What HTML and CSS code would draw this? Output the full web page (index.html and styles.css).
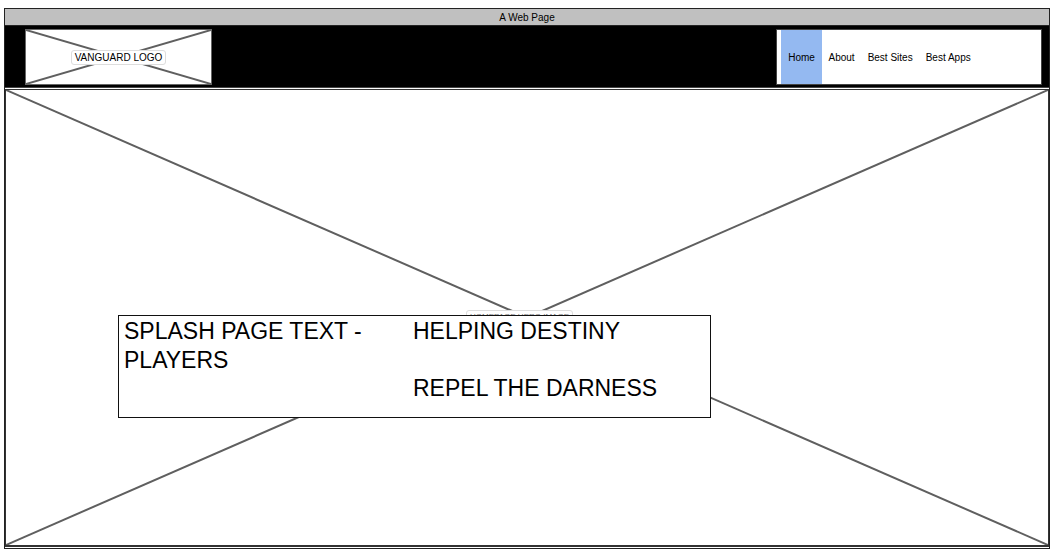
FILE: index.html
```html
<!DOCTYPE html>
<html>
<head>
<meta charset="utf-8">
<link rel="stylesheet" href="styles.css">
</head>
<body>
<div class="window">
  <div class="titlebar">A Web Page</div>
  <div class="header">
    <div class="logo">
      <svg class="xsvg" viewBox="0 0 100 100" preserveAspectRatio="none"><line x1="0" y1="0" x2="100" y2="100" vector-effect="non-scaling-stroke"/><line x1="100" y1="0" x2="0" y2="100" vector-effect="non-scaling-stroke"/></svg>
      <span class="label">VANGUARD LOGO</span>
    </div>
    <nav class="nav">
      <a class="item active">Home</a>
      <a class="item">About</a>
      <a class="item">Best Sites</a>
      <a class="item">Best Apps</a>
    </nav>
  </div>
  <div class="hero">
    <svg class="xsvg" viewBox="0 0 100 100" preserveAspectRatio="none"><line x1="0" y1="0" x2="100" y2="100" vector-effect="non-scaling-stroke"/><line x1="100" y1="0" x2="0" y2="100" vector-effect="non-scaling-stroke"/></svg>
    <span class="label hero-label">HOMEPAGE HERO IMAGE</span>
    <div class="splash">
      <div class="col col1">SPLASH PAGE TEXT - PLAYERS</div>
      <div class="col col2">HELPING DESTINY<br><br>REPEL THE DARNESS</div>
    </div>
  </div>
</div>
</body>
</html>
```
FILE: styles.css
```css
* { box-sizing: border-box; }
body {
  margin: 0;
  background: #fff;
  font-family: "Liberation Sans", Arial, sans-serif;
  color: #000;
}
.window {
  margin: 8px 0 0 4px;
  width: 1046px;
  height: 541px;
  border: 1px solid #222;
  display: flex;
  flex-direction: column;
}
.titlebar {
  height: 17px;
  background: #c0c0c0;
  border-bottom: 1px solid #222;
  font-size: 10px;
  line-height: 18px;
  text-align: center;
}
.header {
  height: 62px;
  background: #000;
  display: flex;
  align-items: stretch;
  padding: 3px 7px 2px 20px;
  border-bottom: 1px solid #444;
}
.logo {
  position: relative;
  width: 187px;
  background: #fff;
  border: 1px solid #666;
  display: flex;
  align-items: center;
  justify-content: center;
}
.xsvg {
  position: absolute;
  inset: 0;
  width: 100%;
  height: 100%;
}
.xsvg line {
  stroke: #5f5f5f;
  stroke-width: 2;
}
.label {
  position: relative;
  background: #fff;
  border: 1px solid #ddd;
  border-radius: 3px;
  font-size: 10px;
  padding: 1px 3px;
}
.nav {
  margin-left: auto;
  width: 266px;
  background: #fff;
  border: 1px solid #444;
  display: flex;
  align-items: stretch;
  padding-left: 4px;
}
.item {
  display: flex;
  align-items: center;
  font-size: 10px;
  padding: 0 6.5px;
}
.item.active {
  background: #94b9f1;
  width: 41px;
  justify-content: center;
  padding: 0;
}
.hero {
  position: relative;
  flex: 1;
  margin: 1px 0 1px 0;
  border: 1px solid #333;
  border-bottom-width: 2px;
}
.hero-label {
  position: absolute;
  left: 460px;
  top: 220px;
  font-size: 8px;
  color: #777;
}
.splash {
  position: absolute;
  left: 112px;
  top: 225px;
  width: 593px;
  height: 103px;
  background: #fff;
  border: 1.5px solid #111;
  display: flex;
  padding: 1px 0 0 5px;
  font-size: 23px;
  line-height: 28.5px;
}
.col1 { width: 289px; }
.col2 { flex: 1; }
```
